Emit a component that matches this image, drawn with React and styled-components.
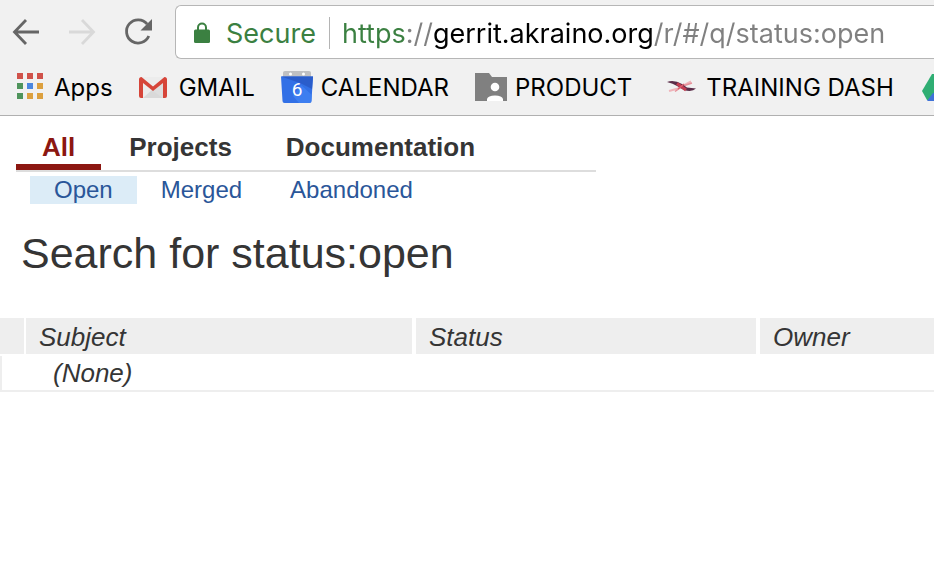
import styled, { createGlobalStyle } from 'styled-components';

const GlobalStyle = createGlobalStyle`
  * {
    box-sizing: border-box;
  }
  body {
    margin: 0;
    background: #fff;
    overflow-x: hidden;
    font-family: 'Liberation Sans', Arial, sans-serif;
    color: #353535;
  }
`;

const Chrome = styled.header`
  background: #f1f1f1;
  border-bottom: 1px solid #b0b0b0;
  padding-top: 5px;
  font-family: Inter, Roboto, sans-serif;
  overflow: hidden;
`;

const Toolbar = styled.div`
  display: flex;
  align-items: center;
  padding-left: 10px;
`;

const NavButtons = styled.div`
  display: flex;
  gap: 24px;
  margin-right: 21px;
`;

const NavButton = styled.button`
  width: 32px;
  height: 32px;
  padding: 0;
  border: 0;
  background: none;
  color: #666;

  &:disabled {
    color: #d9d9d9;
  }

  svg {
    display: block;
  }
`;

const AddressBar = styled.div`
  flex: 1;
  min-width: 0;
  height: 54px;
  display: flex;
  align-items: center;
  padding: 2px 0 0 16px;
  background: #fff;
  border: 1px solid #b6b6b6;
  border-right: 0;
  border-radius: 6px 0 0 6px;
  font-size: 27px;
`;

const Secure = styled.label`
  display: flex;
  align-items: center;
  gap: 14px;
  padding-right: 13px;
  color: #3b8041;
`;

const Divider = styled.span`
  width: 1px;
  height: 32px;
  background: #b4b4b4;
`;

/* scheme, separator, host and path each get their own colour */
const Url = styled.input`
  flex: 1;
  min-width: 0;
  height: 40px;
  margin-left: 12px;
  padding: 0;
  border: 0;
  outline: 0;
  font: inherit;
  color: transparent;
  background: linear-gradient(
    to right,
    #3b8041 64px,
    #808080 64px 91px,
    #000 91px 312px,
    #808080 312px
  );
  background-clip: text;
`;

const Bookmarks = styled.nav`
  display: flex;
  gap: 26px;
  height: 56px;
  padding-left: 14px;
`;

const Bookmark = styled.a`
  flex: none;
  display: flex;
  align-items: center;
  gap: 8px;
  font-size: 24px;
  color: #000;
  text-decoration: none;
`;

const Tabs = styled.nav`
  display: flex;
  gap: 2px;
  width: 580px;
  max-width: calc(100% - 32px);
  margin-left: 16px;
  padding-top: 14px;
  border-bottom: 2px solid #ddd;
`;

const Tab = styled.a`
  padding: 0 26px;
  height: 40px;
  font-size: 26px;
  line-height: 34px;
  font-weight: bold;
  text-decoration: none;
  color: ${({ $active }) => ($active ? '#8c1711' : '#353535')};
  border-bottom: 6px solid ${({ $active }) => ($active ? '#8c1711' : 'transparent')};
`;

const SubTabs = styled.nav`
  display: flex;
  margin: 4px 0 0 30px;
`;

const SubTab = styled.a`
  padding: 0 24px;
  font-size: 24px;
  line-height: 28px;
  text-decoration: none;
  color: #2a5699;
  background: ${({ $active }) => ($active ? '#dcecf7' : 'none')};
`;

const Title = styled.h1`
  margin: 24px 0 40px 21px;
  font-size: 43px;
  line-height: 50px;
  font-weight: normal;
`;

const ChangeTable = styled.table`
  width: 100%;
  table-layout: fixed;
  border-collapse: separate;
  border-spacing: 0;
  font-size: 26px;
  line-height: 34px;
  font-style: italic;
`;

const HeadCell = styled.th`
  width: ${({ $width }) => $width || 'auto'};
  height: 38px;
  padding: 2px 0 0 13px;
  background: #eee;
  background-clip: padding-box;
  border-right: ${({ $gap }) => $gap || '0'} solid #fff;
  border-bottom: 2px solid #fff;
  font-weight: normal;
  text-align: left;
`;

const EmptyCell = styled.td`
  height: 36px;
  padding: 0 0 0 51px;
  border-left: 2px solid #eee;
  border-bottom: 2px solid #eee;
`;

const BackIcon = () => (
  <svg width='32' height='32' viewBox='0 0 32 32' fill='none' stroke='currentColor' strokeWidth='2.8'>
    <path d='M29 16H5M16 4L4.5 16L16 28' />
  </svg>
);

const ForwardIcon = () => (
  <svg width='32' height='32' viewBox='0 0 32 32' fill='none' stroke='currentColor' strokeWidth='2.8'>
    <path d='M3 16H27M16 4L27.5 16L16 28' />
  </svg>
);

const ReloadIcon = () => (
  <svg width='32' height='32' viewBox='0 0 32 32' fill='none'>
    <path d='M25.2 8.2A11.6 11.6 0 1 0 26.8 20' stroke='currentColor' strokeWidth='2.8' />
    <path d='M30 3v11.5H18.5z' fill='currentColor' />
  </svg>
);

const LockIcon = () => (
  <svg width='20' height='24' viewBox='0 0 20 24' fill='none'>
    <path d='M6 10V6.5a4 4 0 0 1 8 0V10' stroke='#3b8041' strokeWidth='2' />
    <rect x='2' y='8.5' width='16' height='13.500' rx='1.5' fill='#3b8041' />
  </svg>
);

const appColors = [
  '#d0524a', '#d0524a', '#d0524a',
  '#4f945c', '#4b87e0', '#dca03f',
  '#4f945c', '#dca03f', '#dca03f',
];

const AppsIcon = () => (
  <svg width='32' height='32' viewBox='0 0 32 32'>
    {appColors.map((color, i) => (
      <rect key={i} x={3 + (i % 3) * 10} y={2 + Math.floor(i / 3) * 10} width='6' height='6' fill={color} />
    ))}
  </svg>
);

const GmailIcon = () => (
  <svg width='32' height='32' viewBox='0 0 32 32'>
    <rect x='1' y='6' width='26' height='21' rx='1.5' fill='#ececec' />
    <path d='M4 27l10-9 10 9z' fill='#d9d9d9' />
    <path d='M14 20l10-9v16z' fill='#dedede' />
    <path d='M0 8.5Q0 6 2.5 6L14 15.5 25.5 6Q28 6 28 8.5V25Q28 27 26 27H24V12L14 20 4 12V27H2Q0 27 0 25z' fill='#d64539' />
  </svg>
);

const CalendarIcon = () => (
  <svg width='32' height='32' viewBox='0 0 32 32'>
    <path d='M2 1.500Q2 0 4 0H28Q30 0 30 1.500V6H2z' fill='#bfc0c2' />
    <circle cx='9.500' cy='3' r='1.500' fill='#fff' />
    <circle cx='22.500' cy='3' r='1.500' fill='#fff' />
    <path d='M0 5.500H32L30.500 30Q30.500 32 28.500 32H3.500Q1.500 32 1.500 30z' fill='#3270e6' />
    <path d='M0 5.500H32L31 18L19 12Z' fill='#2a5dcb' />
    <path d='M12 25L20 14L31 24L30.500 30Q30.500 32 28.500 32H18z' fill='#4285f4' opacity='0.700' />
    <text x='16' y='25' textAnchor='middle' fontFamily='Roboto' fontSize='19' fill='#fff'>6</text>
  </svg>
);

const FolderIcon = () => (
  <svg width='32' height='32' viewBox='0 0 32 32'>
    <path d='M0 2H14L17 6H32V30H0z' fill='#808080' />
    <circle cx='20' cy='16' r='4.300' fill='#fff' />
    <path d='M12 30V28Q13 24.500 20 24.500T28 28V30z' fill='#fff' />
  </svg>
);

const TrainingIcon = () => (
  <svg width='40' height='32' viewBox='0 0 40 32' fill='none'>
    <path d='M11 20L20 17.500 33 10.500' stroke='#efb4ba' strokeWidth='2' />
    <path d='M17 20.500L25 15 34 12' stroke='#e6919a' strokeWidth='1.500' />
    <path d='M9 11Q16 8.500 24 13L29 16.500 38 17.500Q34 21.500 26 19L19 15Q15 12.500 9 11z' fill='#5a2c48' />
    <path d='M19 12.500L28 19' stroke='#c43c50' strokeWidth='3' />
    <path d='M20 18L26 13' stroke='#d8606e' strokeWidth='1.500' />
  </svg>
);

const DriveIcon = () => (
  <svg width='32' height='32' viewBox='0 0 32 32'>
    <path d='M12 3H21L12 29H7L2 20z' fill='#2fae73' />
    <path d='M13 22H32L26 30H7z' fill='#3f72d8' />
  </svg>
);

const bookmarks = [
  { label: 'Apps', Icon: AppsIcon },
  { label: 'GMAIL', Icon: GmailIcon },
  { label: 'CALENDAR', Icon: CalendarIcon },
  { label: 'PRODUCT', Icon: FolderIcon },
  { label: 'TRAINING DASH', Icon: TrainingIcon },
];

const App = () => {
  return (
    <>
      <GlobalStyle />
      <Chrome>
        <Toolbar>
          <NavButtons>
            <NavButton aria-label='Back'>
              <BackIcon />
            </NavButton>
            <NavButton aria-label='Forward' disabled>
              <ForwardIcon />
            </NavButton>
            <NavButton aria-label='Reload'>
              <ReloadIcon />
            </NavButton>
          </NavButtons>
          <AddressBar>
            <Secure htmlFor='url'>
              <LockIcon />
              Secure
            </Secure>
            <Divider />
            <Url id='url' defaultValue='https://gerrit.akraino.org/r/#/q/status:open' spellCheck={false} />
          </AddressBar>
        </Toolbar>
        <Bookmarks>
          {bookmarks.map(({ label, Icon }) => (
            <Bookmark key={label} href='#'>
              <Icon />
              {label}
            </Bookmark>
          ))}
          <Bookmark href='#' aria-label='Drive'>
            <DriveIcon />
          </Bookmark>
        </Bookmarks>
      </Chrome>
      <main>
        <Tabs>
          <Tab href='#' $active>All</Tab>
          <Tab href='#'>Projects</Tab>
          <Tab href='#'>Documentation</Tab>
        </Tabs>
        <SubTabs>
          <SubTab href='#' $active>Open</SubTab>
          <SubTab href='#'>Merged</SubTab>
          <SubTab href='#'>Abandoned</SubTab>
        </SubTabs>
        <Title>Search for status:open</Title>
        <ChangeTable>
          <thead>
            <tr>
              <HeadCell $width='26px' $gap='2px' />
              <HeadCell $width='390px' $gap='4px'>Subject</HeadCell>
              <HeadCell $width='344px' $gap='4px'>Status</HeadCell>
              <HeadCell>Owner</HeadCell>
            </tr>
          </thead>
          <tbody>
            <tr>
              <EmptyCell colSpan={4}>(None)</EmptyCell>
            </tr>
          </tbody>
        </ChangeTable>
      </main>
    </>
  );
};

export default App;
